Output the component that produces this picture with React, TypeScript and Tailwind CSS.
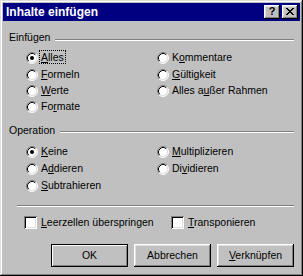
import React from 'react';

const bevel =
  'shadow-[inset_-1px_-1px_#000,inset_1px_1px_#fff,inset_-2px_-2px_#808080,inset_2px_2px_#dfdfdf]';

const Radio = ({ checked }: { checked?: boolean }) => (
  <svg width="12" height="12" viewBox="0 0 12 12" className="shrink-0">
    <circle cx="6" cy="6" r="5" fill="#fff" />
    <path d="M2.11 9.89A5.5 5.5 0 0 1 9.89 2.11" stroke="#808080" fill="none" />
    <path d="M2.82 9.18A4.5 4.5 0 0 1 9.18 2.82" stroke="#000" fill="none" />
    <path d="M9.89 2.11A5.5 5.5 0 0 1 2.11 9.89" stroke="#fff" fill="none" />
    <path d="M9.18 2.82A4.5 4.5 0 0 1 2.82 9.18" stroke="#dfdfdf" fill="none" />
    {checked && <circle cx="6" cy="6" r="2" fill="#000" />}
  </svg>
);

const Check = () => (
  <span className="block w-[13px] h-[13px] shrink-0 bg-white shadow-[inset_1px_1px_#808080,inset_-1px_-1px_#fff,inset_2px_2px_#000,inset_-2px_-2px_#dfdfdf]" />
);

// label with one underlined accelerator letter
const Acc = ({ pre, key_, post }: { pre: string; key_: string; post: string }) => (
  <span>
    {pre}
    <u className="underline-offset-[1px]">{key_}</u>
    {post}
  </span>
);

const RadioRow = ({ h, checked, children }: { h: string; checked?: boolean; children: React.ReactNode }) => (
  <div className={`flex items-center ${h}`}>
    <Radio checked={checked} />
    <div className="ml-[3px]">{children}</div>
  </div>
);

const GroupHead = ({ label, lineOffset }: { label: string; lineOffset: string }) => (
  <div className="flex h-[13px] leading-[13px] pl-[6px] pr-[6px]">
    <span>{label}</span>
    <div className={`flex-1 ml-[5px] h-[2px] border-t border-b border-t-[#808080] border-b-white ${lineOffset}`} />
  </div>
);

export default function App() {
  return (
    <div className="w-[303px] h-[276px] bg-[#c0c0c0] p-[3px] flex flex-col text-black text-[10.5px] font-['Liberation_Sans',Arial,sans-serif] shadow-[inset_-1px_-1px_#000,inset_1px_1px_#dfdfdf,inset_-2px_-2px_#808080,inset_2px_2px_#fff]">
      {/* Titelleiste */}
      <div className="h-[18px] bg-[#000080] flex items-center pl-[3px] pr-[2px] shrink-0">
        <span className="text-white font-bold text-[12px] leading-[18px] flex-1">Inhalte einfügen</span>
        <div className="flex gap-[2px]">
          <div className={`w-[16px] h-[14px] bg-[#c0c0c0] ${bevel} flex items-center justify-center font-bold text-[11px] leading-none pb-[1px]`}>?</div>
          <div className={`w-[16px] h-[14px] bg-[#c0c0c0] ${bevel} flex items-center justify-center`}>
            <svg width="8" height="7" viewBox="0 0 8 7" shapeRendering="crispEdges" className="mb-[1px]">
              <path
                fill="#000"
                d="M0 0h2v1H0zM6 0h2v1H6zM1 1h2v1H1zM5 1h2v1H5zM2 2h4v1H2zM3 3h2v1H3zM2 4h4v1H2zM1 5h2v1H1zM5 5h2v1H5zM0 6h2v1H0zM6 6h2v1H6z"
              />
            </svg>
          </div>
        </div>
      </div>

      {/* Einfügen */}
      <div className="mt-[10px]">
        <GroupHead label="Einfügen" lineOffset="mt-[8px]" />
      </div>
      <div className="mt-[5px] ml-[23px] grid grid-cols-[131px_1fr]">
        <div className="flex flex-col">
          <RadioRow h="h-[17px]" checked>
            <span className="-ml-[2px] border border-dotted border-black leading-[13px] px-[1px]">
              <Acc pre="" key_="A" post="lles" />
            </span>
          </RadioRow>
          <RadioRow h="h-[17px]"><Acc pre="" key_="F" post="ormeln" /></RadioRow>
          <RadioRow h="h-[16px]"><Acc pre="" key_="W" post="erte" /></RadioRow>
          <RadioRow h="h-[16px]"><Acc pre="Fo" key_="r" post="mate" /></RadioRow>
        </div>
        <div className="flex flex-col">
          <RadioRow h="h-[17px]"><Acc pre="K" key_="o" post="mmentare" /></RadioRow>
          <RadioRow h="h-[17px]"><Acc pre="" key_="G" post="ültigkeit" /></RadioRow>
          <RadioRow h="h-[16px]"><Acc pre="Alles a" key_="u" post="ßer Rahmen" /></RadioRow>
        </div>
      </div>

      {/* Operation */}
      <div className="mt-[9px]">
        <GroupHead label="Operation" lineOffset="mt-[7px]" />
      </div>
      <div className="mt-[7px] ml-[23px] grid grid-cols-[131px_1fr]">
        <div className="flex flex-col">
          <RadioRow h="h-[16px]" checked><Acc pre="" key_="K" post="eine" /></RadioRow>
          <RadioRow h="h-[17px]"><Acc pre="A" key_="d" post="dieren" /></RadioRow>
          <RadioRow h="h-[17px]"><Acc pre="" key_="S" post="ubtrahieren" /></RadioRow>
        </div>
        <div className="flex flex-col">
          <RadioRow h="h-[16px]"><Acc pre="" key_="M" post="ultiplizieren" /></RadioRow>
          <RadioRow h="h-[17px]"><Acc pre="Di" key_="v" post="idieren" /></RadioRow>
        </div>
      </div>

      {/* Trennlinie */}
      <div className="mt-[11px] ml-[14px] mr-[6px] h-[2px] border-t border-b border-t-[#808080] border-b-white" />

      {/* Optionen */}
      <div className="mt-[9px] ml-[21px] grid grid-cols-[147px_1fr]">
        <div className="flex items-center h-[13px]">
          <Check />
          <span className="ml-[4px]"><Acc pre="" key_="L" post="eerzellen überspringen" /></span>
        </div>
        <div className="flex items-center h-[13px]">
          <Check />
          <span className="ml-[4px]"><Acc pre="" key_="T" post="ransponieren" /></span>
        </div>
      </div>

      {/* Schaltflächen */}
      <div className="mt-[15px] flex justify-end gap-[6px] pr-[6px]">
        <button className="w-[77px] h-[23px] bg-[#c0c0c0] border border-black shadow-[inset_1px_1px_#fff,inset_-1px_-1px_#808080] flex items-center justify-center">
          OK
        </button>
        <button className={`w-[77px] h-[23px] bg-[#c0c0c0] ${bevel} flex items-center justify-center`}>
          Abbrechen
        </button>
        <button className={`w-[77px] h-[23px] bg-[#c0c0c0] ${bevel} flex items-center justify-center`}>
          <Acc pre="" key_="V" post="erknüpfen" />
        </button>
      </div>
    </div>
  );
}
